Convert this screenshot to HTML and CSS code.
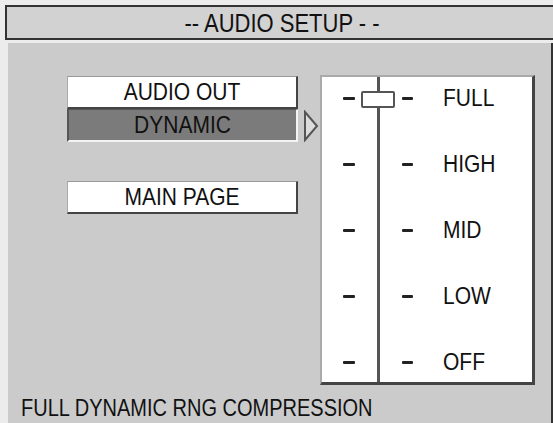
FILE: index.html
```html
<!DOCTYPE html>
<html lang="en">
<head>
    <meta charset="UTF-8">
    <meta name="viewport" content="width=device-width, initial-scale=1.0">
    <title>Audio Setup</title>
    <link rel="stylesheet" href="styles.css">
</head>
<body>
    <div class="screen">
        <div class="header"><span class="text">-- AUDIO SETUP - -</span></div>

        <div class="panel">
            <div class="content">
                <div class="menu">
                    <div class="item">
                        <div class="button"><span class="text">AUDIO OUT</span></div>
                    </div>
                    <div class="item">
                        <div class="button selected"><span class="text">DYNAMIC</span></div>
                        <svg class="marker" width="16" height="32" viewBox="0 0 16 32">
                            <polygon points="2,2 14,16 2,30" fill="#dcdcdc" stroke="#555" stroke-width="2"/>
                        </svg>
                    </div>
                    <div class="item spaced">
                        <div class="button"><span class="text">MAIN PAGE</span></div>
                    </div>
                </div>

                <div class="slider">
                    <div class="level">
                        <span class="dash"></span>
                        <span class="knob-cell"><span class="knob"></span></span>
                        <span class="dash short"></span>
                        <span class="label text">FULL</span>
                    </div>
                    <div class="level">
                        <span class="dash"></span>
                        <span class="knob-cell"></span>
                        <span class="dash short"></span>
                        <span class="label text">HIGH</span>
                    </div>
                    <div class="level">
                        <span class="dash"></span>
                        <span class="knob-cell"></span>
                        <span class="dash short"></span>
                        <span class="label text">MID</span>
                    </div>
                    <div class="level">
                        <span class="dash"></span>
                        <span class="knob-cell"></span>
                        <span class="dash short"></span>
                        <span class="label text">LOW</span>
                    </div>
                    <div class="level">
                        <span class="dash"></span>
                        <span class="knob-cell"></span>
                        <span class="dash short"></span>
                        <span class="label text">OFF</span>
                    </div>
                </div>
            </div>

            <div class="status"><span class="text">FULL DYNAMIC RNG COMPRESSION</span></div>
        </div>
    </div>
</body>
</html>
```

FILE: styles.css
```css
body {
    margin: 0;
    padding: 0;
    background-color: #ececec;
    font-family: "Liberation Sans", Arial, sans-serif;
    color: #111;
}

.screen {
    width: 553px;
    height: 423px;
    overflow: hidden;
    display: flex;
    flex-direction: column;
}

/* the TV picture is stretched a bit vertically */
.text {
    display: inline-block;
    transform: scaleY(1.15);
}

.header {
    margin: 5px -6px 0 5px;
    height: 28px;
    padding-top: 3px;
    line-height: 28px;
    border: 2px solid #333;
    background-color: #d2d2d2;
    text-align: center;
    font-size: 22px;
}

.panel {
    flex: 1;
    margin: 3px 0 0 8px;
    background-color: #cbcbcb;
    border-right: 2px solid #333;
    padding: 32px 0 0 13px;
}

.content {
    display: flex;
    align-items: flex-start;
}

.menu {
    margin: 1px 0 0 46px;
    width: 253px;
}

.item {
    display: flex;
    align-items: center;
}

.item.spaced {
    margin-top: 39px;
}

.button {
    box-sizing: border-box;
    width: 231px;
    height: 33px;
    line-height: 30px;
    text-align: center;
    font-size: 21px;
    background-color: #fff;
    border-top: 1px solid #999;
    border-left: 1px solid #aaa;
    border-right: 2px solid #444;
    border-bottom: 2px solid #444;
}

.button.selected {
    background-color: #7b7b7b;
    border-top: 1px solid #555;
    border-left: 2px solid #555;
    border-right: 2px solid #f4f4f4;
    border-bottom: 2px solid #f4f4f4;
}

.marker {
    margin-left: 5px;
}

.slider {
    box-sizing: border-box;
    width: 215px;
    height: 310px;
    padding-top: 9px;
    background-color: #fff;
    background-image: linear-gradient(to right, transparent 55px, #555 55px, #555 58px, transparent 58px);
    border-top: 2px solid #aaa;
    border-left: 2px solid #aaa;
    border-right: 3px solid #444;
    border-bottom: 3px solid #444;
    display: flex;
    flex-direction: column;
    gap: 42px;
}

.level {
    display: flex;
    align-items: center;
    height: 24px;
}

.dash {
    width: 12px;
    height: 3px;
    margin-left: 21px;
    background-color: #222;
    border-radius: 1px;
}

.dash.short {
    width: 11px;
    margin-left: 7px;
}

.knob-cell {
    width: 34px;
    margin-left: 6px;
    display: flex;
    justify-content: center;
}

.knob {
    box-sizing: border-box;
    width: 34px;
    height: 17px;
    margin-top: 3px;
    background-color: #fff;
    border: 2px solid #555;
    border-radius: 2px;
}

.label {
    margin-left: 30px;
    font-size: 21px;
}

.status {
    margin-top: 12px;
    font-size: 20px;
}
```
